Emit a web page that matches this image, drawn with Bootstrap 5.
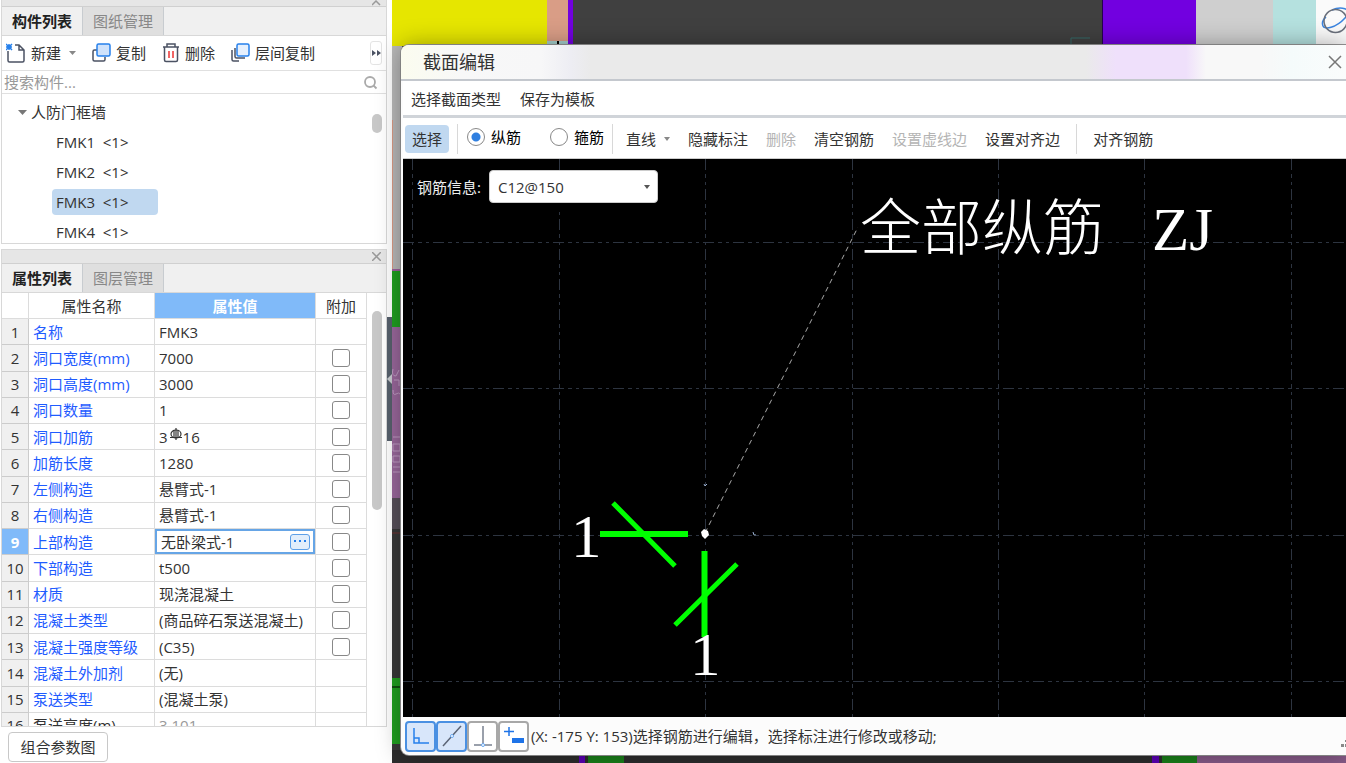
<!DOCTYPE html>
<html lang="zh-CN">
<head>
<meta charset="utf-8">
<meta name="viewport" content="width=device-width, initial-scale=1">
<title>截面编辑</title>
<link href="https://cdn.jsdelivr.net/npm/bootstrap@5.3.0/dist/css/bootstrap.min.css" rel="stylesheet">
<style>
:root { --line:#d8d8d8; --ink:#333; --pick:#c0d8f0; }
body { font-family:"Open Sans","Noto Sans CJK SC",sans-serif; font-size:15px; line-height:20px; color:var(--ink); background:#fff; }
button { font-size:15px; line-height:20px; color:inherit; background:none; border:0; padding:0; white-space:nowrap; }
button:disabled { color:#b4b4b4; }
svg { display:block; }

/* docked panels */
.dock { width:392px; padding:0 5px 0 1px; background:#fff; }
.panel { border:1px solid var(--line); border-top:0; }
.panel-props { margin-top:5px; min-height:0; }
.grip { height:15px; background:#e6e6e6; border-bottom:1px solid #d0d0d0; padding-right:5px; border-top:1px solid var(--line); }
.grip-cut { height:7px; border-top:0; overflow:hidden; }
.tabs { height:29px; background:#f0f0f0; border-bottom:1px solid var(--line); }
.tabs button { width:81px; border-right:1px solid #c8ccd0; background:#dfdfdf; color:#888; }
.tabs button.on { background:#f0f0f0; color:#222; font-weight:700; }
.tools { height:35px; border-bottom:1px solid #e0e0e0; padding-left:4px; }
.tools button { gap:4px; }
.more { width:12px; height:24px; border:1px solid #e4e4e4 !important; border-radius:3px; }
.find { height:23px; border-bottom:1px solid #e0e0e0; padding-right:8px; }
.find input { border:0; outline:0; background:none; padding:0 0 0 2px; color:#333; }
.find input::placeholder { color:#999; }
.tree { height:149px; padding-top:3px; }
.tree li { height:30px; }
.tree .leaf { width:106px; height:26px; margin-left:50px; padding:0 4px; border-radius:4px; white-space:pre; }
.tree .leaf.on { background:var(--pick); }
.thumb { position:absolute; right:4px; width:10px; border-radius:5px; background:#c8c8c8; }
.props { margin:0; height:446px; width:365px; table-layout:fixed; border-collapse:separate; border-spacing:0; color:var(--ink); line-height:20px; }
.props th, .props td { padding:0 4px; height:26px; border:0; border-right:1px solid #dcdcdc; border-bottom:1px solid #dcdcdc; font-weight:400; white-space:nowrap; overflow:hidden; vertical-align:middle; }
.props thead th { text-align:center; }
.props thead .hot, .props .hotrow { background:#80baf9; color:#fff; font-weight:700; }
.props tbody th { background:#f0f0f0; text-align:center; border-right-color:#ccc; border-bottom-color:#ccc; padding:0; }
.props tbody th.hotrow { background:#80baf9; }
.props tbody td:nth-child(2) { color:#1f5cff; }
.props tbody tr.last td:nth-child(2) { color:var(--ink); }
.props tbody tr.last td:nth-child(3) { color:#999; }
.props td:last-child { text-align:center; }
.props .editing { box-shadow:inset 0 0 0 2px #66a5e6; padding:0 5px 0 6px; }
.props input[type=checkbox] { display:block; width:18px; height:18px; margin:0 auto; border:1px solid #888; border-radius:3px; box-shadow:none; float:none; }
.dots { width:20px; height:16px; border:1px solid #5ea0e8; border-radius:3px; background:#e2eefb; }
.foot { height:36px; padding:5px 0 0 7px; }
.foot button { width:100px; height:30px; border:1px solid #c8c8c8; border-radius:4px; }
.pull { position:absolute; right:0; top:317px; width:5px; height:124px; background:#56606c; }

/* drawing area behind the window */
.desk { padding:45px 0 8px 9px; background:#383838; }
.backdrop { position:absolute; inset:0; width:100%; height:100%; }
.dialogue { border-radius:8px 0 0 8px; background:#fcfcfc; box-shadow:0 0 24px rgba(0,0,0,.35), 0 0 0 1px #9a9a9a; padding-left:2px; }
.caption { height:36px; margin-left:-2px; padding:0 4px 0 22px; font-size:18px; border-radius:8px 0 0 0; border-bottom:2px solid #c4c8ce;
  background:linear-gradient(90deg,#fbfcef 0,#f8f8f8 60px,#f7f7f8 140px,#ededf3 170px,#eaeaea 190px,#eaeaea 685px,#efe0fb 715px,#efe0fb 785px,#f8f8f8 805px,#f8f8f8 860px,#f5fbfb 890px,#fafcfc 100%); }
.menus { height:37px; padding:2px 0 0 8px; gap:19px; border-bottom:3px solid #d0d4d9; background:#fff; }
.ribbon { height:41px; padding:2px 0 0 2px; background:#fff; border-bottom:1px solid #ccc; }
.pick { width:44px; height:28px; border-radius:4px; background:var(--pick); }
.rule { width:1px; height:30px; background:#d8d8d8; }
.ribbon .form-check-input { width:18px; height:18px; margin:0 6px 0 0; border:1px solid #888; box-shadow:none; }
.ribbon .form-check-input:checked { background:radial-gradient(circle,#2f7fe0 0 4px,#fff 5px); border-color:#888; }
.ribbon label { color:#000; }
.kinds { gap:29px; margin:0 8px 4px 9px; }
.acts { gap:18px; margin-left:13px; }
.stage { background:#000; }
.rebar { position:absolute; left:14px; top:11px; gap:8px; color:#eee; background:#000; height:38px; padding-bottom:5px; }
.rebar select { width:169px; height:33px; border:1px solid #ccc; border-radius:4px; padding:0 8px; background:#fff; color:#333; appearance:none; }
.rebar .caret { position:absolute; right:8px; top:15px; }
.gridline { stroke:#2d3440; stroke-width:1; stroke-dasharray:11 4 4 4 3 4; }
.cad { fill:#fff; font-family:"Liberation Serif","Noto Sans CJK SC",serif; font-size:61px; font-weight:300; }
.status { height:38px; padding-left:2px; }
.status button { width:31px; height:31px; border:2px solid #a8a8a8; border-radius:4px; background:#fff; }
.status button.on { border-color:#4a90e2; background:#d8e6fa; }
.status span { padding-left:2px; }
</style>
</head>
<body class="vh-100 overflow-hidden d-flex">

<aside class="dock position-relative d-flex flex-column flex-shrink-0 vh-100">
  <section class="panel">
    <div class="grip grip-cut d-flex justify-content-end align-items-end"><svg width="9" height="6" fill="none" stroke="#999" stroke-width="1.5"><path d="M0 5 4 1 8 5"/></svg></div>
    <div class="tabs d-flex"><button class="on">构件列表</button><button>图纸管理</button></div>
    <div class="tools d-flex align-items-center">
      <button class="d-flex align-items-center">
        <svg width="21" height="22" fill="none" stroke="#4b5263" stroke-width="1.5"><path d="M2 9v9.500q0 1.500 1.500 1.500h13q1.500 0 1.500-1.500V8l-5-5H9M13 3v5h5"/><path d="M0 2l6 6M6 2 0 8M3 2v6M0 5h6" stroke="#2680eb" stroke-width="1.500"/></svg>新建</button>
      <svg class="ms-2" width="7" height="4"><path d="M0 0h7L3.500 4z" fill="#888"/></svg>
      <button class="d-flex align-items-center ms-3">
        <svg width="20" height="22" fill="none" stroke-width="1.500"><path d="M5 8H1.500Q0 8 0 9.500v8Q0 19 1.500 19h9q1.500 0 1.500-1.500V15" transform="translate(1)" stroke="#4b5263"/><rect x="5" y="2" width="13" height="12" rx="1.500" fill="#cfe2fb" stroke="#2680eb"/></svg>复制</button>
      <button class="d-flex align-items-center ms-3">
        <svg width="19" height="22" fill="none" stroke="#4b5263" stroke-width="1.500"><path d="M1 5h16M5 5V2h8v3M2.500 5v13q0 1.500 1.500 1.500h10q1.500 0 1.500-1.500V5"/><path d="M7 9v7M11 9v7" stroke="#e33"/></svg>删除</button>
      <button class="d-flex align-items-center ms-3">
        <svg width="20" height="22" fill="none" stroke-width="1.500"><path d="M1 8v9.500Q1 19 2.500 19H8M4 6v8.500Q4 16 5.500 16H14" stroke="#4b5263"/><rect x="6" y="2" width="12" height="12" rx="1.500" fill="#e6f0fd" stroke="#2680eb"/></svg>层间复制</button>
      <button class="more ms-auto me-1 d-flex align-items-center justify-content-center" aria-label="更多"><svg width="9" height="6"><path d="M0 0 4 3 0 6zM5 0 9 3 5 6z" fill="#4b5263"/></svg></button>
    </div>
    <div class="find d-flex align-items-center">
      <input class="flex-grow-1" type="text" placeholder="搜索构件..." aria-label="搜索构件">
      <svg width="15" height="15" fill="none" stroke="#aaa" stroke-width="1.800"><circle cx="7" cy="7" r="5"/><path d="m10.500 10.500 3 3"/></svg>
    </div>
    <div class="tree position-relative overflow-hidden">
      <ul class="list-unstyled m-0">
        <li class="d-flex align-items-center ps-3"><svg class="me-1" width="9" height="5"><path d="M0 0h9L4.500 5z" fill="#777"/></svg>人防门框墙</li>
        <li class="d-flex align-items-center"><button class="leaf text-start">FMK1  &lt;1&gt;</button></li>
        <li class="d-flex align-items-center"><button class="leaf text-start">FMK2  &lt;1&gt;</button></li>
        <li class="d-flex align-items-center"><button class="leaf on text-start">FMK3  &lt;1&gt;</button></li>
        <li class="d-flex align-items-center"><button class="leaf text-start">FMK4  &lt;1&gt;</button></li>
      </ul>
      <span class="thumb" style="top:20px;height:19px"></span>
    </div>
  </section>

  <section class="panel panel-props flex-fill d-flex flex-column overflow-hidden">
    <div class="grip flex-shrink-0 d-flex justify-content-end align-items-center"><svg width="9" height="9" stroke="#999" stroke-width="1.500"><path d="M0 0 9 9M9 0 0 9"/></svg></div>
    <div class="tabs flex-shrink-0 d-flex"><button class="on">属性列表</button><button>图层管理</button></div>
    <div class="position-relative flex-fill overflow-hidden">
      <table class="props table">
        <colgroup><col style="width:27px"><col style="width:126px"><col style="width:161px"><col style="width:51px"></colgroup>
        <thead><tr><th></th><th>属性名称</th><th class="hot">属性值</th><th>附加</th></tr></thead>
        <tbody>
          <tr><th>1</th><td>名称</td><td>FMK3</td><td></td></tr>
          <tr><th>2</th><td>洞口宽度(mm)</td><td>7000</td><td><input class="form-check-input" type="checkbox" aria-label="洞口宽度 附加"></td></tr>
          <tr><th>3</th><td>洞口高度(mm)</td><td>3000</td><td><input class="form-check-input" type="checkbox" aria-label="洞口高度 附加"></td></tr>
          <tr><th>4</th><td>洞口数量</td><td>1</td><td><input class="form-check-input" type="checkbox" aria-label="洞口数量 附加"></td></tr>
          <tr><th>5</th><td>洞口加筋</td><td><span class="d-flex">3<svg width="15" height="16" fill="none" stroke="#333" stroke-width="1.200"><ellipse cx="8" cy="7" rx="5" ry="4"/><path d="M8 1v12M6 3v8M10 3v8M2 10.500h12"/></svg>16</span></td><td><input class="form-check-input" type="checkbox" aria-label="洞口加筋 附加"></td></tr>
          <tr><th>6</th><td>加筋长度</td><td>1280</td><td><input class="form-check-input" type="checkbox" aria-label="加筋长度 附加"></td></tr>
          <tr><th>7</th><td>左侧构造</td><td>悬臂式-1</td><td><input class="form-check-input" type="checkbox" aria-label="左侧构造 附加"></td></tr>
          <tr><th>8</th><td>右侧构造</td><td>悬臂式-1</td><td><input class="form-check-input" type="checkbox" aria-label="右侧构造 附加"></td></tr>
          <tr><th class="hotrow">9</th><td>上部构造</td><td class="editing"><span class="d-flex align-items-center justify-content-between">无卧梁式-1<button class="dots d-flex align-items-center justify-content-center" aria-label="编辑"><svg width="12" height="3" fill="#2680eb"><path d="M0 0h2v2H0zM5 0h2v2H5zM10 0h2v2h-2z"/></svg></button></span></td><td><input class="form-check-input" type="checkbox" aria-label="上部构造 附加"></td></tr>
          <tr><th>10</th><td>下部构造</td><td>t500</td><td><input class="form-check-input" type="checkbox" aria-label="下部构造 附加"></td></tr>
          <tr><th>11</th><td>材质</td><td>现浇混凝土</td><td><input class="form-check-input" type="checkbox" aria-label="材质 附加"></td></tr>
          <tr><th>12</th><td>混凝土类型</td><td>(商品碎石泵送混凝土)</td><td><input class="form-check-input" type="checkbox" aria-label="混凝土类型 附加"></td></tr>
          <tr><th>13</th><td>混凝土强度等级</td><td>(C35)</td><td><input class="form-check-input" type="checkbox" aria-label="混凝土强度等级 附加"></td></tr>
          <tr><th>14</th><td>混凝土外加剂</td><td>(无)</td><td></td></tr>
          <tr><th>15</th><td>泵送类型</td><td>(混凝土泵)</td><td></td></tr>
          <tr class="last"><th>16</th><td>泵送高度(m)</td><td>3.101</td><td></td></tr>
        </tbody>
      </table>
      <span class="thumb" style="top:18px;height:199px"></span>
    </div>
  </section>
  <div class="foot flex-shrink-0"><button>组合参数图</button></div>
  <div class="pull"><svg width="5" height="124"><path d="M5 57v10L0 62z" fill="#c8ccd0"/></svg></div>
</aside>

<main class="desk position-relative flex-fill d-flex flex-column" style="min-width:0">
  <svg class="backdrop" aria-hidden="true">
    <rect width="100%" height="46" fill="#404040"/>
    <rect y="45" width="10" height="224" fill="#b9b9b9"/><path d="M.5 120v150" stroke="#d89a84"/>
    <rect width="155" height="46" fill="#e6e600"/><rect x="155" width="21" height="41" fill="#d99d86"/><rect x="155" y="41" width="21" height="4" fill="#a5cfcd"/><path d="M166 41v4" stroke="#000" stroke-width="2"/><rect x="176" width="5" height="46" fill="#7200e0"/>
    <path d="M679 45v-7h19" stroke="#356a68" fill="none"/>
    <rect x="710" width="94" height="46" fill="#7200e0"/><path d="M710.500 0v46" stroke="#240050"/><rect x="804" width="77" height="46" fill="#cfcfcf"/><rect x="881" width="43" height="46" fill="#b5e1df"/><rect x="924" width="100%" height="46" fill="#fafafa"/>
    <g fill="none" stroke-width="1.500"><path d="M940 10c8-4 22-2 13 8s-21 12-22 8q-2-5 3-9" stroke="#3a84e0"/><circle cx="943.500" cy="21" r="11.500" stroke="#6a707c"/></g>
    <rect y="269" width="10" height="3" fill="#a060a0"/><rect y="271" width="10" height="56" fill="#20a020"/><rect y="327" width="10" height="171" fill="#9a689c"/><path d="M1 369q-2 7 3 7l3-6M2 380h5v6M1 390q0 6 3 4t4 0M1 437h7M1 444h7v7H1zM1 456h7v6H1zM1 467h7M1 472h7" fill="none" stroke="#c09cc4"/>
    <rect y="498" width="10" height="31" fill="#57505a"/><path d="M0 533h10" stroke="#703030"/><rect y="678" width="10" height="66" fill="#20a020"/><path d="M0 687h10" stroke="#000"/>
    <rect y="750" width="100%" height="20" fill="#2d2d2d"/><rect x="187" y="750" width="6" height="20" fill="#5a00b4"/><rect x="196" y="750" width="36" height="20" fill="#1a7f1a"/>
    <rect x="760" y="750" width="7" height="20" fill="#5a00b4"/><rect x="770" y="750" width="35" height="20" fill="#1a7f1a"/><rect x="805" y="750" width="100%" height="20" fill="#875a88"/>
  </svg>

  <section class="dialogue position-relative flex-fill d-flex flex-column" role="dialog" aria-label="截面编辑">
    <header class="caption flex-shrink-0 d-flex align-items-center justify-content-between"><span>截面编辑</span>
      <button aria-label="关闭"><svg width="14" height="14" stroke="#777" stroke-width="1.500"><path d="M1 1 13 13M13 1 1 13"/></svg></button></header>
    <nav class="menus flex-shrink-0 d-flex align-items-center"><button>选择截面类型</button><button>保存为模板</button></nav>
    <div class="ribbon flex-shrink-0 d-flex align-items-center">
      <button class="pick">选择</button><span class="rule ms-2"></span>
      <div class="kinds d-flex align-items-center">
        <div class="d-flex align-items-center"><input class="form-check-input" type="radio" name="bar" id="main-bar" checked><label for="main-bar">纵筋</label></div>
        <div class="d-flex align-items-center"><input class="form-check-input" type="radio" name="bar" id="hoop"><label for="hoop">箍筋</label></div>
      </div>
      <span class="rule"></span>
      <div class="acts d-flex align-items-center">
        <button class="d-flex align-items-center">直线<svg class="ms-2" width="6" height="4"><path d="M0 0h6L3 4z" fill="#888"/></svg></button>
        <button>隐藏标注</button><button disabled>删除</button><button>清空钢筋</button><button disabled>设置虚线边</button><button>设置对齐边</button>
      </div>
      <span class="rule mx-3"></span><button>对齐钢筋</button>
    </div>
    <div class="stage position-relative flex-fill overflow-hidden">
      <svg class="position-absolute w-100 h-100" role="img" aria-label="截面图">
        <g class="gridline">
          <path d="M9.500 0v900M156.500 0v900M302.500 0v900M449.500 0v900M595.500 0v900M741.500 0v900M888.500 0v900"/>
          <path d="M0 83.500h3000M0 229.500h3000M0 376.500h3000M0 522.500h3000"/>
        </g>
        <path d="M302 374 455 68" stroke="#aaa" stroke-dasharray="5 4"/>
        <g stroke="#0f0" stroke-width="6"><path d="M197 375h88M301.500 392v86"/><path d="M210 344l62 63M334 405l-62 61" stroke-width="5"/></g>
        <path d="M298 373l3-3 4 2 1 4-4 4-3-3z" fill="#fff"/><path d="M301 325l1 2 2-2M350 373l1 3h2" stroke="#9ab0d0" fill="none"/>
        <text class="cad" x="457" y="91">全部纵筋</text><text class="cad" x="749" y="91">ZJ</text>
        <text class="cad" x="168" y="398">1</text><text class="cad" x="287" y="516">1</text>
      </svg>
      <div class="rebar d-flex align-items-center"><label for="rebar">钢筋信息:</label>
        <select id="rebar"><option>C12@150</option></select><svg class="caret" width="6" height="4"><path d="M0 0h6L3 4z" fill="#555"/></svg></div>
    </div>
    <footer class="status flex-shrink-0 position-relative d-flex align-items-center">
      <button class="on d-flex align-items-center justify-content-center" aria-label="正交"><svg width="18" height="18" fill="none" stroke="#2680eb" stroke-width="1.500"><path d="M2 1v15h15M2 11h5v5"/></svg></button>
      <button class="on d-flex align-items-center justify-content-center" aria-label="中点"><svg width="20" height="22" fill="none" stroke="#5b6475" stroke-width="1.500"><path d="M1 21 19 1"/><circle cx="10" cy="11" r="1.500" fill="#fff" stroke="#6aa8f0" stroke-width="1"/></svg></button>
      <button class="d-flex align-items-center justify-content-center" aria-label="垂点"><svg width="20" height="22" fill="none" stroke="#7a8190" stroke-width="1.500"><path d="M10 1v19M1 20h18"/><circle cx="10" cy="20" r="1.500" fill="#fff" stroke="#6aa8f0" stroke-width="1"/></svg></button>
      <button class="d-flex align-items-center justify-content-center" aria-label="偏移"><svg width="22" height="20" fill="none" stroke="#1f74e8" stroke-width="1.500"><path d="M6 1v9M1 5.500h10"/><rect x="9" y="12" width="12" height="5" fill="#1f74e8" stroke="none"/></svg></button>
      <span>(X: -175 Y: 153)选择钢筋进行编辑，选择标注进行修改或移动;</span>
      <svg class="ms-auto mt-3" width="5" height="8" fill="#888"><path d="M0 4h3v3H0zM4 4h1v3H4zM4 0h1v2H4z"/></svg>
    </footer>
  </section>
</main>

<script src="https://cdn.jsdelivr.net/npm/bootstrap@5.3.0/dist/js/bootstrap.bundle.min.js"></script>
</body>
</html>
